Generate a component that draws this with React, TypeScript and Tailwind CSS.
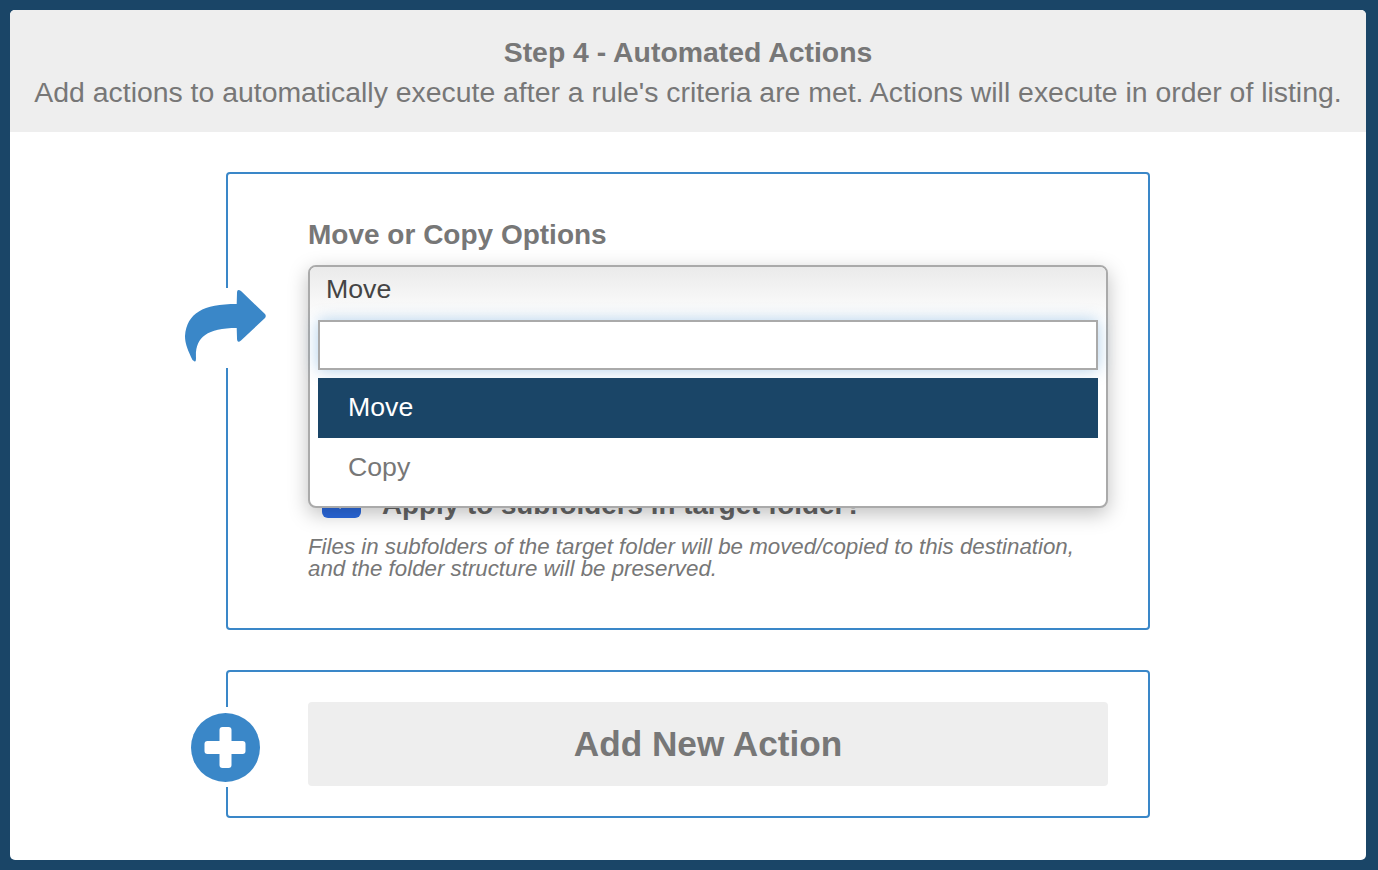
import React from "react";

const ArrowIcon: React.FC = () => (
  <svg width="84" height="80" viewBox="0 0 84 80" className="block">
    <path
      d="M53 5 Q53 0 57 3 L81 26 Q82.5 28 81 30 L57 52.5 Q53 56 53 50 L52.7 40 C22 40 11 50 12 70 Q12 75 10 73 Q8 72 7 69 C3 60 1 55 1 48 C3 25 19 16 52.7 16 Z"
      fill="#3a87c8"
    />
  </svg>
);

const PlusIcon: React.FC = () => (
  <svg width="69" height="69" viewBox="0 0 69 69" className="block">
    <circle cx="34.5" cy="34.5" r="34.5" fill="#3a87c8" />
    <rect x="13.5" y="28" width="41" height="13" rx="3" fill="#fff" />
    <rect x="28.5" y="14" width="12" height="41" rx="3" fill="#fff" />
  </svg>
);

const App: React.FC = () => {
  return (
    <div className="h-[870px] overflow-hidden bg-[#1a4567] pt-[10px] pl-[10px] pr-[12px] font-['Liberation_Sans',Arial,sans-serif]">
      <div className="h-[850px] overflow-hidden rounded-[5px] bg-white">
        <header className="h-[122px] bg-[#eeeeee] pt-[22px] text-center text-[28.4px] leading-[40px] text-[#777777]">
          <h1 className="font-bold">Step 4 - Automated Actions</h1>
          <p>Add actions to automatically execute after a rule's criteria are met. Actions will execute in order of listing.</p>
        </header>

        <div className="mx-auto mt-[40px] flex w-[924px] flex-col gap-[40px]">
          <section className="relative h-[458px] rounded-[4px] border-2 border-[#3a87c8] pl-[80px] pr-[40px] pt-[43px]">
            <div className="absolute left-[-44px] top-[114px] bg-white">
              <ArrowIcon />
            </div>

            <h2 className="text-[28px] font-bold leading-[36px] text-[#777777]">Move or Copy Options</h2>

            <div className="relative mt-[12px] h-[215px]">
              <div className="absolute inset-x-0 top-0 z-10 h-[243px] rounded-[8px] border-2 border-[#aaaaaa] bg-white shadow-[0_6px_20px_rgba(0,0,0,0.25)]">
                <div className="h-[53px] rounded-t-[6px] bg-gradient-to-b from-[#eaeaea] to-white pl-[16px] pt-[3px] text-[26.7px] leading-[38px] text-[#444444]">
                  Move
                </div>
                <div className="px-[8px]">
                  <input
                    type="text"
                    aria-label="Search"
                    className="block h-[50px] w-full border-2 border-[#aaaaaa] bg-white shadow-[0_0_16px_rgba(58,135,200,0.4)] outline-none"
                  />
                  <ul className="mt-[8px] text-[26.7px] leading-[58px]">
                    <li className="h-[60px] bg-[#1a4567] pl-[30px] text-white">Move</li>
                    <li className="h-[60px] pl-[30px] text-[#777777]">Copy</li>
                  </ul>
                </div>
              </div>
            </div>

            <label className="flex h-[38px] items-start gap-[21px] pl-[14px]">
              <span className="flex h-[38px] w-[39px] shrink-0 items-center justify-center rounded-[6px] bg-[#2b6ae0]">
                <svg width="26" height="26" viewBox="0 0 26 26" fill="none" stroke="#fff" strokeWidth="4">
                  <path d="M4 13 L11 20 L23 6" />
                </svg>
              </span>
              <span className="mt-[6px] text-[27.8px] font-bold leading-[38px] text-[#666666]">Apply to subfolders in target folder?</span>
            </label>

            <p className="mt-[18px] text-[22.3px] italic leading-[22px] text-[#777777]">
              Files in subfolders of the target folder will be moved/copied to this destination,
              <br />
              and the folder structure will be preserved.
            </p>
          </section>

          <section className="relative rounded-[4px] border-2 border-[#3a87c8] pl-[80px] pr-[40px] py-[30px]">
            <div className="absolute left-[-37px] top-[35px] flex h-[80px] items-center bg-white">
              <PlusIcon />
            </div>
            <button
              type="button"
              className="block h-[84px] w-full rounded-[4px] bg-[#eeeeee] text-[35.2px] font-bold text-[#777777]"
            >
              Add New Action
            </button>
          </section>
        </div>
      </div>
    </div>
  );
};

export default App;
